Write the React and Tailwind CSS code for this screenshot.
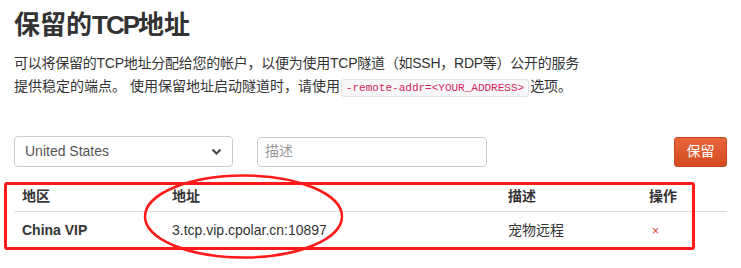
export default function App() {
  const font = { fontFamily: '"Liberation Sans", "Noto Sans CJK SC", sans-serif' };
  return (
    <div className="w-[741px] h-[268px] bg-white text-[#333] overflow-hidden px-[14px]" style={font}>
      <h1 className="pt-[9px] text-[26px] leading-[32px] font-bold text-[#333]">
        保留的<span className="tracking-[-2px]">TCP</span>地址
      </h1>
      <p className="mt-[11px] text-[14px] leading-[23px] text-[#333]">
        <span className="tracking-[-0.25px]">可以将保留的TCP地址分配给您的帐户，以便为使用TCP隧道（如SSH，RDP等）公开的服务</span>
        <br />
        提供稳定的端点。 使用保留地址启动隧道时，请使用
        <code className="mx-[1px] px-[4px] py-[2px] text-[11px] leading-[14px] text-[#d6245a] bg-[#f7f7f9] border border-[#e1e1e8] rounded-[3px] font-['Liberation_Mono',monospace]">
          -remote-addr=&lt;YOUR_ADDRESS&gt;
        </code>
        选项。
      </p>
      <div className="mt-[38px] flex items-center h-[31px]">
        <div className="relative w-[219px] h-[31px] border border-[#ccc] rounded-[4px] flex items-center pl-[10px] text-[14px] text-[#555]">
          United States
          <svg className="absolute right-[10px] top-[11px]" width="11" height="8" viewBox="0 0 11 8">
            <path d="M1.5 1.5 L5.5 5.5 L9.5 1.5" fill="none" stroke="#444" strokeWidth="2" />
          </svg>
        </div>
        <div className="ml-[24px] w-[230px] h-[30px] border border-[#ccc] rounded-[4px] flex items-center pl-[7px] text-[14px] text-[#999]">
          描述
        </div>
        <div className="ml-auto w-[53px] h-[30px] rounded-[3px] bg-gradient-to-b from-[#e8653b] to-[#d24a1d] border border-[#c9461c] flex items-center justify-center text-[14px] text-white">
          保留
        </div>
      </div>
      <div className="relative mt-[15px] w-[713px]">
        <div className="flex h-[30px] items-center text-[14px] font-bold border-b border-[#ddd]">
          <div className="w-[150px] pl-[8px]">地区</div>
          <div className="w-[336px] pl-[8px]">地址</div>
          <div className="w-[141px] pl-[8px]">描述</div>
          <div className="pl-[8px]">操作</div>
        </div>
        <div className="flex h-[37px] items-center text-[14px]">
          <div className="w-[150px] pl-[8px] font-bold">China VIP</div>
          <div className="w-[336px] pl-[8px]">3.tcp.vip.cpolar.cn:10897</div>
          <div className="w-[141px] pl-[8px]">宠物远程</div>
          <div className="pl-[11px] text-[#d9372b] text-[12px]">×</div>
        </div>
        <div className="absolute left-[-10px] top-0 w-[691px] h-[68px] border-[3px] border-[#ff1a1a] rounded-[3px]"></div>
        <svg className="absolute left-[126px] top-[-10px]" width="206" height="90" viewBox="0 0 206 90">
          <ellipse cx="103.5" cy="44.5" rx="98.5" ry="41" fill="none" stroke="#ff1a1a" strokeWidth="2.5" />
        </svg>
      </div>
    </div>
  );
}
